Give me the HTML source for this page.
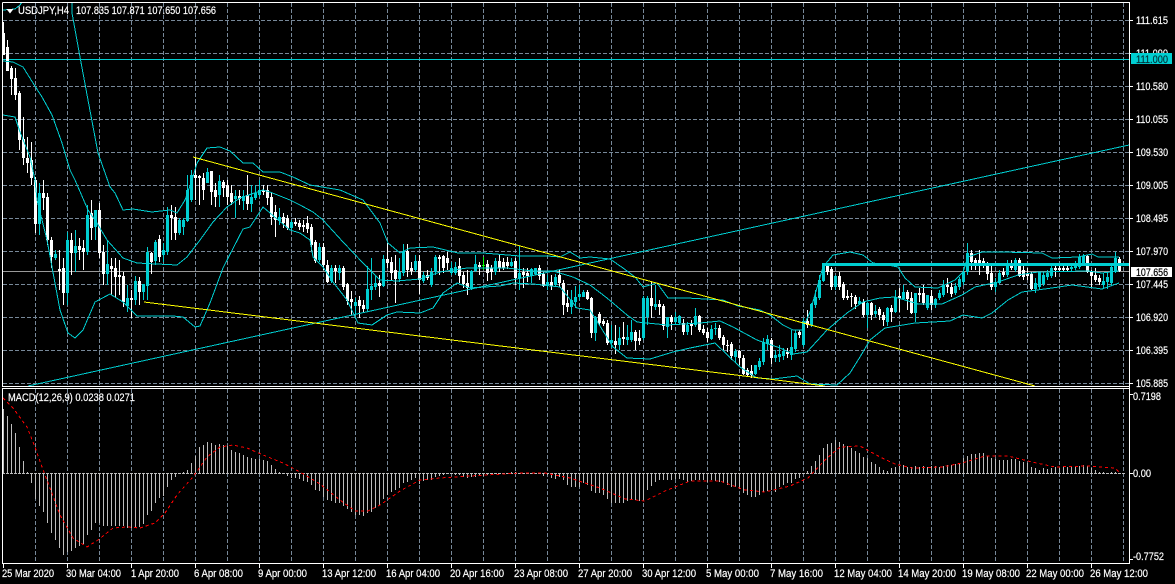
<!DOCTYPE html>
<html><head><meta charset="utf-8"><title>USDJPY,H4</title>
<style>
html,body{margin:0;padding:0;background:#000;width:1175px;height:584px;overflow:hidden}
svg{display:block;position:absolute;left:0;top:0}
text{font-family:"Liberation Sans",Arial,sans-serif;font-size:11px;fill:#fff;stroke:#fff;stroke-width:.2}
</style></head><body>
<svg width="1175" height="584" viewBox="0 0 1175 584" xmlns="http://www.w3.org/2000/svg">
<defs><clipPath id="m"><rect x="3" y="3" width="1126" height="383"/></clipPath><clipPath id="s"><rect x="3" y="389" width="1126" height="174"/></clipPath></defs>
<rect width="1175" height="584" fill="#000"/>
<g shape-rendering="crispEdges" fill="none">
<!-- grid -->
<path stroke="#778899" stroke-dasharray="4 2" d="M3 20.5H1129M3 53.5H1129M3 86.5H1129M3 119.5H1129M3 152.5H1129M3 185.5H1129M3 218.5H1129M3 251.5H1129M3 284.5H1129M3 317.5H1129M3 350.5H1129M3 383.5H1129"/>
<path stroke="#778899" stroke-dasharray="4 2" d="M35.5 3V386M67.5 3V386M99.5 3V386M131.5 3V386M163.5 3V386M195.5 3V386M227.5 3V386M259.5 3V386M291.5 3V386M323.5 3V386M355.5 3V386M387.5 3V386M419.5 3V386M451.5 3V386M483.5 3V386M515.5 3V386M547.5 3V386M579.5 3V386M611.5 3V386M643.5 3V386M675.5 3V386M707.5 3V386M739.5 3V386M771.5 3V386M803.5 3V386M835.5 3V386M867.5 3V386M899.5 3V386M931.5 3V386M963.5 3V386M995.5 3V386M1027.5 3V386M1059.5 3V386M1091.5 3V386M1123.5 3V386"/>
<path stroke="#778899" stroke-dasharray="4 2" d="M35.5 389V563M67.5 389V563M99.5 389V563M131.5 389V563M163.5 389V563M195.5 389V563M227.5 389V563M259.5 389V563M291.5 389V563M323.5 389V563M355.5 389V563M387.5 389V563M419.5 389V563M451.5 389V563M483.5 389V563M515.5 389V563M547.5 389V563M579.5 389V563M611.5 389V563M643.5 389V563M675.5 389V563M707.5 389V563M739.5 389V563M771.5 389V563M803.5 389V563M835.5 389V563M867.5 389V563M899.5 389V563M931.5 389V563M963.5 389V563M995.5 389V563M1027.5 389V563M1059.5 389V563M1091.5 389V563M1123.5 389V563"/>
<!-- horizontal levels -->
<path stroke="#00ced1" d="M3 59.5H1129"/>
<path stroke="#999" d="M3 271.5H1129"/>
<!-- cyan wicks -->
<path stroke="#00ced1" d="M39.5 183V235M55.5 250V260M67.5 232V305M75.5 230V272M87.5 205V255M95.5 210V240M107.5 240V285M127.5 285V312M135.5 276V305M143.5 284V300M147.5 247V300M155.5 240V265M163.5 243V262M167.5 207V255M179.5 218V235M183.5 218V235M187.5 175V222M191.5 170V202M207.5 168V183M219.5 175V207M235.5 190V218M243.5 190V210M251.5 185V212M255.5 185V200M259.5 180V197M279.5 208V225M291.5 220V230M319.5 243V262M331.5 265V283M339.5 265V280M355.5 298V315M367.5 266V312M371.5 258V300M375.5 275V290M383.5 255V287M399.5 258V282M403.5 244V276M415.5 255V272M423.5 272V283M431.5 268V287M435.5 255V275M451.5 262V275M455.5 262V275M471.5 270V290M475.5 255V272M495.5 258V275M511.5 258V267M519.5 246V290M531.5 268V283M535.5 268V275M547.5 275V290M555.5 274V287M571.5 290V314M575.5 286V308M579.5 285V300M583.5 290V297M595.5 316V341M611.5 325V348M619.5 327V350M627.5 325V345M631.5 320V342M643.5 296V340M647.5 296V325M655.5 285V310M667.5 317V338M675.5 312V324M679.5 315V325M687.5 322V335M695.5 308V327M711.5 325V340M715.5 323V335M735.5 349V362M755.5 365V375M759.5 358V370M763.5 338V365M767.5 335V350M775.5 350V362M779.5 345V362M783.5 348V360M791.5 330V360M795.5 330V352M803.5 318V347M811.5 303V327M815.5 290V308M819.5 275V300M823.5 264V282M835.5 275V290M859.5 297V305M867.5 302V328M875.5 305V317M887.5 307V326M895.5 290V313M903.5 285V300M915.5 293V322M927.5 295V310M935.5 298V308M939.5 290V300M943.5 280V297M955.5 283V295M959.5 277V290M963.5 270V285M967.5 243V275M995.5 278V292M999.5 270V284M1007.5 260V277M1015.5 258V272M1035.5 278V293M1039.5 272V289M1043.5 272V286M1047.5 270V280M1051.5 265V278M1071.5 265V271M1075.5 261V270M1079.5 254V269M1083.5 254V265M1103.5 273V289M1107.5 272V289M1111.5 265V285M1115.5 252V273"/>
<!-- cyan bodies -->
<path stroke="#00ced1" stroke-width="3" d="M39.5 193V224M55.5 254V258M67.5 240V293M75.5 246V253M87.5 215V252M95.5 210V227M107.5 264V274M127.5 298V306M135.5 281V300M143.5 284V292M147.5 252V286M155.5 242V261M163.5 250V255M167.5 215V252M179.5 220V233M183.5 220V227M187.5 190V221M191.5 175V200M207.5 172V183M219.5 181V195M235.5 196V199M243.5 196V201M251.5 197V204M255.5 193V198M259.5 190V195M279.5 217V221M291.5 222V228M319.5 247V260M331.5 268V281M339.5 268V273M355.5 302V306M367.5 289V309M371.5 286V290M375.5 283V287M383.5 259V286M399.5 272V279M403.5 251V273M415.5 261V270M423.5 275V281M431.5 272V285M435.5 257V272M451.5 268V273M455.5 267V273M471.5 271V288M475.5 264V271M495.5 261V272M511.5 262V266M519.5 273V278M531.5 269V276M535.5 268V274M547.5 282V286M555.5 277V285M571.5 300V307M575.5 297V302M579.5 294V297M583.5 292V297M595.5 317V333M611.5 340V343M619.5 338V345M627.5 337V340M631.5 332V340M643.5 298V338M647.5 298V317M655.5 304V307M667.5 317V327M675.5 317V322M679.5 316V323M687.5 325V332M695.5 316V325M711.5 329V339M715.5 328V329M735.5 351V357M755.5 365V374M759.5 361V367M763.5 342V362M767.5 339V344M775.5 355V358M779.5 354V357M783.5 351V356M791.5 347V355M795.5 333V349M803.5 321V345M811.5 304V325M815.5 297V305M819.5 280V298M823.5 265V281M835.5 276V287M859.5 301V304M867.5 303V315M875.5 311V314M887.5 308V322M895.5 297V312M903.5 292V299M915.5 293V313M927.5 295V308M935.5 299V305M939.5 293V298M943.5 285V295M955.5 286V293M959.5 279V287M963.5 272V282M967.5 253V272M995.5 282V287M999.5 273V283M1007.5 263V275M1015.5 260V270M1035.5 283V289M1039.5 272V287M1043.5 275V284M1047.5 273V277M1051.5 268V276M1071.5 267V269M1075.5 263V268M1079.5 257V267M1083.5 256V263M1103.5 281V285M1107.5 277V282M1111.5 267V283M1115.5 258V272"/>
<!-- white wicks -->
<path stroke="#fff" d="M3.5 22V55M7.5 40V71M11.5 66V95M15.5 68V100M19.5 91V150M23.5 117V165M27.5 137V173M31.5 142V185M35.5 177V233M43.5 180V210M47.5 193V245M51.5 237V268M59.5 250V290M63.5 258V305M71.5 233V275M79.5 238V260M83.5 240V270M91.5 200V240M99.5 203V258M103.5 245V285M111.5 258V295M115.5 258V298M119.5 260V295M123.5 272V307M131.5 290V318M139.5 277V305M151.5 252V274M159.5 235V262M171.5 205V240M175.5 207V240M195.5 157V200M199.5 175V205M203.5 173V200M211.5 171V205M215.5 183V207M223.5 180V197M227.5 180V205M231.5 185V205M239.5 190V205M247.5 175V210M263.5 185V195M267.5 185V205M271.5 193V225M275.5 205V237M283.5 213V228M287.5 215V230M295.5 218V226M299.5 220V230M303.5 220V232M307.5 216V233M311.5 224V251M315.5 240V263M323.5 243V270M327.5 260V283M335.5 265V283M343.5 266V290M347.5 283V305M351.5 291V315M359.5 296V318M363.5 300V313M379.5 275V297M387.5 243V268M391.5 257V280M395.5 255V303M407.5 244V277M411.5 262V275M419.5 255V294M427.5 270V280M439.5 255V275M443.5 255V273M447.5 252V270M459.5 258V283M463.5 272V288M467.5 270V295M479.5 262V275M487.5 260V281M491.5 265V280M499.5 255V272M503.5 258V270M507.5 257V269M515.5 258V285M523.5 268V288M527.5 268V282M539.5 265V280M543.5 272V287M551.5 275V290M559.5 270V287M563.5 280V315M567.5 290V312M587.5 290V300M591.5 297V338M599.5 312V325M603.5 319V326M607.5 320V345M615.5 325V354M623.5 322V345M635.5 330V350M639.5 330V345M651.5 282V318M659.5 300V315M663.5 304V330M671.5 315V330M683.5 319V335M691.5 320V335M699.5 315V332M703.5 325V335M707.5 328V342M719.5 325V340M723.5 335V350M727.5 340V352M731.5 342V360M739.5 350V365M743.5 355V375M747.5 368V377M751.5 365V378M771.5 338V364M787.5 348V358M799.5 330V338M807.5 310V328M827.5 264V275M831.5 267V290M839.5 272V290M843.5 282V300M847.5 290V300M851.5 293V307M855.5 295V309M863.5 299V317M871.5 302V320M879.5 307V320M883.5 312V326M891.5 305V322M899.5 288V312M907.5 290V310M911.5 292V314M919.5 288V302M923.5 285V305M931.5 290V310M947.5 278V293M951.5 283V297M971.5 250V270M975.5 258V270M979.5 250V275M983.5 258V268M987.5 262V280M991.5 265V290M1003.5 268V277M1011.5 260V270M1019.5 258V277M1023.5 265V280M1027.5 268V280M1031.5 272V290M1055.5 265V277M1059.5 266V272M1063.5 266V272M1067.5 266V272M1087.5 255V273M1091.5 270V287M1095.5 268V282M1099.5 275V285M1119.5 257V272"/>
<!-- white bodies -->
<path stroke="#fff" stroke-width="3" d="M3.5 33V55M7.5 47V71M11.5 68V79M15.5 78V95M19.5 93V140M23.5 139V158M27.5 158V163M31.5 160V178M35.5 180V224M43.5 193V198M47.5 197V240M51.5 240V257M59.5 269V271M63.5 268V293M71.5 240V253M79.5 246V250M83.5 248V252M91.5 213V228M99.5 210V253M103.5 252V274M111.5 266V269M115.5 268V277M119.5 275V277M123.5 276V302M131.5 298V300M139.5 281V292M151.5 253V262M159.5 239V257M171.5 215V218M175.5 217V233M195.5 175V178M199.5 176V178M203.5 178V190M211.5 171V192M215.5 190V197M223.5 182V188M227.5 185V197M231.5 193V202M239.5 196V199M247.5 195V204M263.5 190V192M267.5 190V198M271.5 197V217M275.5 212V220M283.5 217V223M287.5 218V228M295.5 222V224M299.5 223V227M303.5 225V227M307.5 223V229M311.5 227V245M315.5 242V261M323.5 247V265M327.5 265V282M335.5 268V271M343.5 268V287M347.5 284V301M351.5 299V302M359.5 300V306M363.5 305V309M379.5 283V286M387.5 259V263M391.5 262V273M395.5 270V279M407.5 251V270M411.5 268V271M419.5 261V280M427.5 275V278M439.5 257V259M443.5 256V268M447.5 258V263M459.5 266V276M463.5 275V284M467.5 283V288M479.5 265V267M487.5 264V273M491.5 268V272M499.5 261V268M503.5 262V268M507.5 262V266M515.5 261V278M523.5 272V275M527.5 273V276M539.5 268V276M543.5 274V286M551.5 282V286M559.5 275V283M563.5 283V305M567.5 303V307M587.5 292V299M591.5 298V333M599.5 314V323M603.5 321V324M607.5 323V343M615.5 341V345M623.5 337V339M635.5 332V341M639.5 338V341M651.5 298V306M659.5 304V307M663.5 306V326M671.5 317V322M683.5 323V332M691.5 323V326M699.5 316V330M703.5 329V333M707.5 332V338M719.5 328V338M723.5 337V345M727.5 345V346M731.5 344V356M739.5 351V358M743.5 358V374M747.5 370V375M751.5 371V375M771.5 340V358M787.5 352V354M799.5 332V335M807.5 321V325M827.5 266V272M831.5 269V287M839.5 276V287M843.5 284V298M847.5 296V298M851.5 296V297M855.5 297V304M863.5 302V315M871.5 303V315M879.5 309V315M883.5 315V320M891.5 308V312M899.5 296V298M907.5 292V299M911.5 298V313M919.5 293V295M923.5 293V303M931.5 296V305M947.5 285V287M951.5 287V294M971.5 253V262M975.5 260V263M979.5 260V263M983.5 261V264M987.5 266V274M991.5 273V287M1003.5 272V275M1011.5 263V268M1019.5 260V276M1023.5 270V277M1027.5 274V276M1031.5 274V289M1055.5 268V270M1059.5 268V270M1063.5 268V270M1067.5 268V270M1087.5 256V272M1091.5 271V276M1095.5 275V280M1099.5 278V282M1119.5 259V271"/>
<path stroke="#00ff00" d="M483.5 257V270M482 265.5H485"/>
</g>
<!-- lines -->
<g clip-path="url(#m)" fill="none" shape-rendering="crispEdges">
<g stroke="#00ced1">
<polyline points="3,10 15,9 20,5 22,2"/>
<polyline points="72,3 72,13 80,57 88,100 98,153 110,187 115,193 123,210 133,209 152,212 170,210 177,213 185,200 192,180 197,163 207,148 220,147 230,151 243,163 253,163 263,172 280,172 293,177 310,185 340,190 363,200 380,223 388,243 400,253 410,248 433,247 458,253 483,253 520,256 547,256 560,257 570,252 580,258 590,257 610,259 623,268 635,277 643,287 657,283 668,298 687,298 723,300 738,306 760,310 770,315 783,325 793,330 802,330 810,312 823,267 833,255 850,252 863,255 873,263 888,265 898,267 905,278 915,287 938,288 955,280 963,272 968,257 982,252 1002,252 1042,253 1052,258 1078,257 1092,254 1098,257 1119,257"/>
<polyline points="3,61 13,62 23,67 33,83 42,97 52,115 62,143 70,170 75,180 88,210 97,223 107,240 123,258 137,263 177,265 187,257 200,240 213,222 227,207 240,198 263,190 270,192 290,200 300,205 313,212 323,220 343,242 363,263 380,280 397,281 420,279 440,272 467,268 507,268 533,271 553,271 573,277 590,285 607,298 627,315 637,322 667,325 700,323 720,321 733,327 757,340 780,348 793,354 807,352 827,330 847,313 863,302 880,298 895,297 918,304 942,304 962,295 975,287 998,282 1018,275 1038,272 1088,271 1102,273 1119,271"/>
<polyline points="3,115 15,117 20,132 30,157 35,180 37,200 47,240 52,267 60,310 68,333 75,338 83,330 95,302 110,294 123,302 137,316 173,316 183,317 195,327 200,326 210,303 223,268 243,229 250,227 263,207 270,213 290,230 300,233 310,240 313,257 323,267 333,282 347,300 358,323 372,325 387,315 397,312 420,313 433,308 443,293 457,283 470,288 500,286 513,283 533,284 560,287 577,308 590,310 613,347 627,358 650,359 673,352 690,348 715,343 740,367 757,378 773,379 797,376 810,384 837,385 850,373 860,357 870,340 885,328 915,323 950,321 963,315 982,318 992,313 1008,300 1022,292 1052,288 1072,285 1102,289 1119,283"/>
<polyline points="28,386 1129,145"/>
</g>
<path stroke="#00ced1" stroke-width="3" d="M823.5 276V264.5H1129"/>
<g stroke="#ffff00">
<polyline points="193,157 1035,386"/>
<polyline points="144,302 825,386"/>
</g>
</g>
<!-- histogram -->
<g clip-path="url(#s)" fill="none" shape-rendering="crispEdges">
<path stroke="#bdbdbd" stroke-dasharray="3 1" d="M2 473.5H1125"/>
<path stroke="#bdbdbd" d="M3.5 473V409M7.5 473V416M11.5 473V424M15.5 473V433M19.5 473V447M23.5 473V461M27.5 473V472M31.5 473V483M35.5 473V499M39.5 473V506M43.5 473V512M47.5 473V523M51.5 473V533M55.5 473V540M59.5 473V548M63.5 473V555M67.5 473V552M71.5 473V551M75.5 473V548M79.5 473V546M83.5 473V544M87.5 473V535M91.5 473V530M95.5 473V523M99.5 473V523M103.5 473V526M107.5 473V526M111.5 473V526M115.5 473V526M119.5 473V526M123.5 473V526M127.5 473V528M131.5 473V528M135.5 473V528M139.5 473V527M143.5 473V524M147.5 473V515M151.5 473V511M155.5 473V503M159.5 473V498M163.5 473V496M167.5 473V487M171.5 473V480M175.5 473V477M179.5 473V474M183.5 473V472M187.5 473V470M191.5 473V463M195.5 473V456M199.5 473V447M203.5 473V445M207.5 473V442M211.5 473V443M215.5 473V445M219.5 473V444M223.5 473V445M227.5 473V446M231.5 473V450M235.5 473V452M239.5 473V453M243.5 473V455M247.5 473V457M251.5 473V458M255.5 473V459M259.5 473V459M263.5 473V460M267.5 473V461M271.5 473V465M275.5 473V469M279.5 473V472M287.5 473V476M291.5 473V478M295.5 473V478M299.5 473V479M303.5 473V481M307.5 473V482M311.5 473V485M315.5 473V490M319.5 473V491M323.5 473V497M327.5 473V500M331.5 473V501M335.5 473V503M339.5 473V503M343.5 473V506M347.5 473V509M351.5 473V512M355.5 473V515M359.5 473V515M363.5 473V516M367.5 473V513M371.5 473V512M375.5 473V508M379.5 473V505M383.5 473V499M387.5 473V495M391.5 473V492M395.5 473V490M399.5 473V488M403.5 473V483M407.5 473V482M411.5 473V480M415.5 473V478M419.5 473V484M423.5 473V481M427.5 473V480M431.5 473V480M435.5 473V477M439.5 473V476M443.5 473V475M447.5 473V474M451.5 473V474M455.5 473V475M459.5 473V475M463.5 473V477M467.5 473V478M471.5 473V477M475.5 473V477M479.5 473V476M483.5 473V476M487.5 473V475M491.5 473V474M511.5 473V472M515.5 473V472M543.5 473V476M547.5 473V475M551.5 473V478M555.5 473V479M559.5 473V477M563.5 473V480M567.5 473V485M571.5 473V487M575.5 473V487M579.5 473V487M583.5 473V483M587.5 473V485M591.5 473V491M595.5 473V493M599.5 473V493M603.5 473V495M607.5 473V499M611.5 473V503M615.5 473V503M619.5 473V503M623.5 473V503M627.5 473V501M631.5 473V500M635.5 473V500M639.5 473V501M643.5 473V500M647.5 473V490M651.5 473V486M655.5 473V482M659.5 473V480M663.5 473V480M667.5 473V480M671.5 473V480M675.5 473V479M679.5 473V479M683.5 473V480M687.5 473V482M691.5 473V481M695.5 473V480M699.5 473V480M703.5 473V480M707.5 473V482M711.5 473V480M715.5 473V481M719.5 473V482M723.5 473V483M727.5 473V485M731.5 473V487M735.5 473V487M739.5 473V489M743.5 473V493M747.5 473V495M751.5 473V497M755.5 473V497M759.5 473V495M763.5 473V492M767.5 473V491M771.5 473V490M775.5 473V492M779.5 473V487M783.5 473V485M787.5 473V483M791.5 473V483M795.5 473V479M799.5 473V478M803.5 473V473M807.5 473V471M811.5 473V466M815.5 473V461M819.5 473V455M823.5 473V448M827.5 473V444M831.5 473V443M835.5 473V440M839.5 473V442M843.5 473V444M847.5 473V446M851.5 473V448M855.5 473V451M859.5 473V453M863.5 473V457M867.5 473V458M871.5 473V462M875.5 473V464M879.5 473V467M883.5 473V470M887.5 473V471M891.5 473V468M895.5 473V467M899.5 473V466M903.5 473V465M907.5 473V467M911.5 473V467M915.5 473V466M919.5 473V467M923.5 473V466M927.5 473V467M931.5 473V466M935.5 473V466M939.5 473V467M943.5 473V466M947.5 473V465M951.5 473V465M955.5 473V464M959.5 473V463M963.5 473V458M967.5 473V456M971.5 473V454M975.5 473V454M979.5 473V453M983.5 473V453M987.5 473V456M991.5 473V458M995.5 473V459M999.5 473V460M1003.5 473V460M1007.5 473V460M1011.5 473V459M1015.5 473V459M1019.5 473V461M1023.5 473V462M1027.5 473V463M1031.5 473V467M1035.5 473V468M1039.5 473V470M1043.5 473V468M1047.5 473V469M1051.5 473V468M1055.5 473V467M1059.5 473V468M1063.5 473V467M1067.5 473V467M1071.5 473V467M1075.5 473V467M1079.5 473V466M1083.5 473V465M1087.5 473V466M1091.5 473V468M1095.5 473V470M1099.5 473V472M1103.5 473V472M1107.5 473V473M1111.5 473V472M1115.5 473V472"/>
<polyline stroke="#ff0000" stroke-dasharray="3 3" points="3,398 13,408 27,427 35,447 42,467 50,488 60,515 73,538 87,547 98,540 113,528 127,527 140,528 155,523 165,513 177,495 193,477 207,457 220,447 233,445 247,448 263,455 283,463 300,472 320,484 340,500 355,511 368,511 380,505 400,491 420,480 440,478 470,476 520,473 545,473 570,478 600,488 625,499 645,501 665,491 690,481 720,481 745,490 765,492 790,486 808,478 825,460 840,447 860,446 880,457 895,464 912,468 942,467 962,463 985,456 1008,456 1032,462 1055,467 1088,466 1115,468 1119,472"/>
</g>
<!-- frames -->
<g shape-rendering="crispEdges" fill="none" stroke="#fff">
<path d="M2.5 2.5H1129.5V563.5H2.5V388.5H1129.5M2.5 2.5V386.5H1129.5"/>
<path d="M1130 20.5h3M1130 53.5h3M1130 86.5h3M1130 119.5h3M1130 152.5h3M1130 185.5h3M1130 218.5h3M1130 251.5h3M1130 284.5h3M1130 317.5h3M1130 350.5h3M1130 383.5h3M1130 394.5h3M1130 473.5h3M1130 559.5h3"/>
<path d="M3.5 564v4M67.5 564v4M131.5 564v4M195.5 564v4M259.5 564v4M323.5 564v4M387.5 564v4M451.5 564v4M515.5 564v4M579.5 564v4M643.5 564v4M707.5 564v4M771.5 564v4M835.5 564v4M899.5 564v4M963.5 564v4M1027.5 564v4M1091.5 564v4"/>
</g>
<polygon points="6.5,9 13.5,9 10,13.5" fill="#fff"/>
<!-- header -->
<text x="18" y="14" textLength="51" lengthAdjust="spacingAndGlyphs">USDJPY,H4</text>
<text x="76" y="14" textLength="140" lengthAdjust="spacingAndGlyphs">107.835 107.871 107.650 107.656</text>
<text x="8" y="401" textLength="127" lengthAdjust="spacingAndGlyphs">MACD(12,26,9) 0.0238 0.0271</text>
<!-- price axis -->
<g>
<text x="1136" y="24" textLength="32" lengthAdjust="spacingAndGlyphs">111.615</text>
<text x="1136" y="57" textLength="32" lengthAdjust="spacingAndGlyphs">111.090</text>
<text x="1136" y="90" textLength="32" lengthAdjust="spacingAndGlyphs">110.580</text>
<text x="1136" y="123" textLength="32" lengthAdjust="spacingAndGlyphs">110.055</text>
<text x="1136" y="156" textLength="32" lengthAdjust="spacingAndGlyphs">109.530</text>
<text x="1136" y="189" textLength="32" lengthAdjust="spacingAndGlyphs">109.005</text>
<text x="1136" y="222" textLength="32" lengthAdjust="spacingAndGlyphs">108.495</text>
<text x="1136" y="255" textLength="32" lengthAdjust="spacingAndGlyphs">107.970</text>
<text x="1136" y="288" textLength="32" lengthAdjust="spacingAndGlyphs">107.445</text>
<text x="1136" y="321" textLength="32" lengthAdjust="spacingAndGlyphs">106.920</text>
<text x="1136" y="354" textLength="32" lengthAdjust="spacingAndGlyphs">106.395</text>
<text x="1136" y="387" textLength="32" lengthAdjust="spacingAndGlyphs">105.885</text>
<rect x="1131" y="53" width="41" height="11" fill="#00ced1" shape-rendering="crispEdges"/>
<text x="1136" y="63" textLength="32" lengthAdjust="spacingAndGlyphs" style="fill:#00343a;stroke:#00343a">111.000</text>
<rect x="1131" y="267" width="41" height="10" fill="#fff" shape-rendering="crispEdges"/>
<text x="1136" y="276" textLength="32" lengthAdjust="spacingAndGlyphs" style="fill:#000;stroke:#000">107.656</text>
<text x="1133" y="400" textLength="28" lengthAdjust="spacingAndGlyphs">0.7198</text>
<text x="1133" y="477" textLength="18" lengthAdjust="spacingAndGlyphs">0.00</text>
<text x="1133" y="560" textLength="31" lengthAdjust="spacingAndGlyphs">-0.7752</text>
</g>
<!-- time axis -->
<g>
<text x="2" y="577" textLength="52" lengthAdjust="spacingAndGlyphs">25 Mar 2020</text>
<text x="66" y="577" textLength="55" lengthAdjust="spacingAndGlyphs">30 Mar 04:00</text>
<text x="131" y="577" textLength="48" lengthAdjust="spacingAndGlyphs">1 Apr 20:00</text>
<text x="194" y="577" textLength="49" lengthAdjust="spacingAndGlyphs">6 Apr 08:00</text>
<text x="258" y="577" textLength="49" lengthAdjust="spacingAndGlyphs">9 Apr 00:00</text>
<text x="322" y="577" textLength="54" lengthAdjust="spacingAndGlyphs">13 Apr 12:00</text>
<text x="386" y="577" textLength="54" lengthAdjust="spacingAndGlyphs">16 Apr 04:00</text>
<text x="450" y="577" textLength="54" lengthAdjust="spacingAndGlyphs">20 Apr 16:00</text>
<text x="514" y="577" textLength="54" lengthAdjust="spacingAndGlyphs">23 Apr 08:00</text>
<text x="578" y="577" textLength="54" lengthAdjust="spacingAndGlyphs">27 Apr 20:00</text>
<text x="642" y="577" textLength="54" lengthAdjust="spacingAndGlyphs">30 Apr 12:00</text>
<text x="706" y="577" textLength="53" lengthAdjust="spacingAndGlyphs">5 May 00:00</text>
<text x="770" y="577" textLength="53" lengthAdjust="spacingAndGlyphs">7 May 16:00</text>
<text x="834" y="577" textLength="58" lengthAdjust="spacingAndGlyphs">12 May 04:00</text>
<text x="898" y="577" textLength="58" lengthAdjust="spacingAndGlyphs">14 May 20:00</text>
<text x="962" y="577" textLength="58" lengthAdjust="spacingAndGlyphs">19 May 08:00</text>
<text x="1026" y="577" textLength="58" lengthAdjust="spacingAndGlyphs">22 May 00:00</text>
<text x="1090" y="577" textLength="58" lengthAdjust="spacingAndGlyphs">26 May 12:00</text>
</g>
</svg>
</body></html>
